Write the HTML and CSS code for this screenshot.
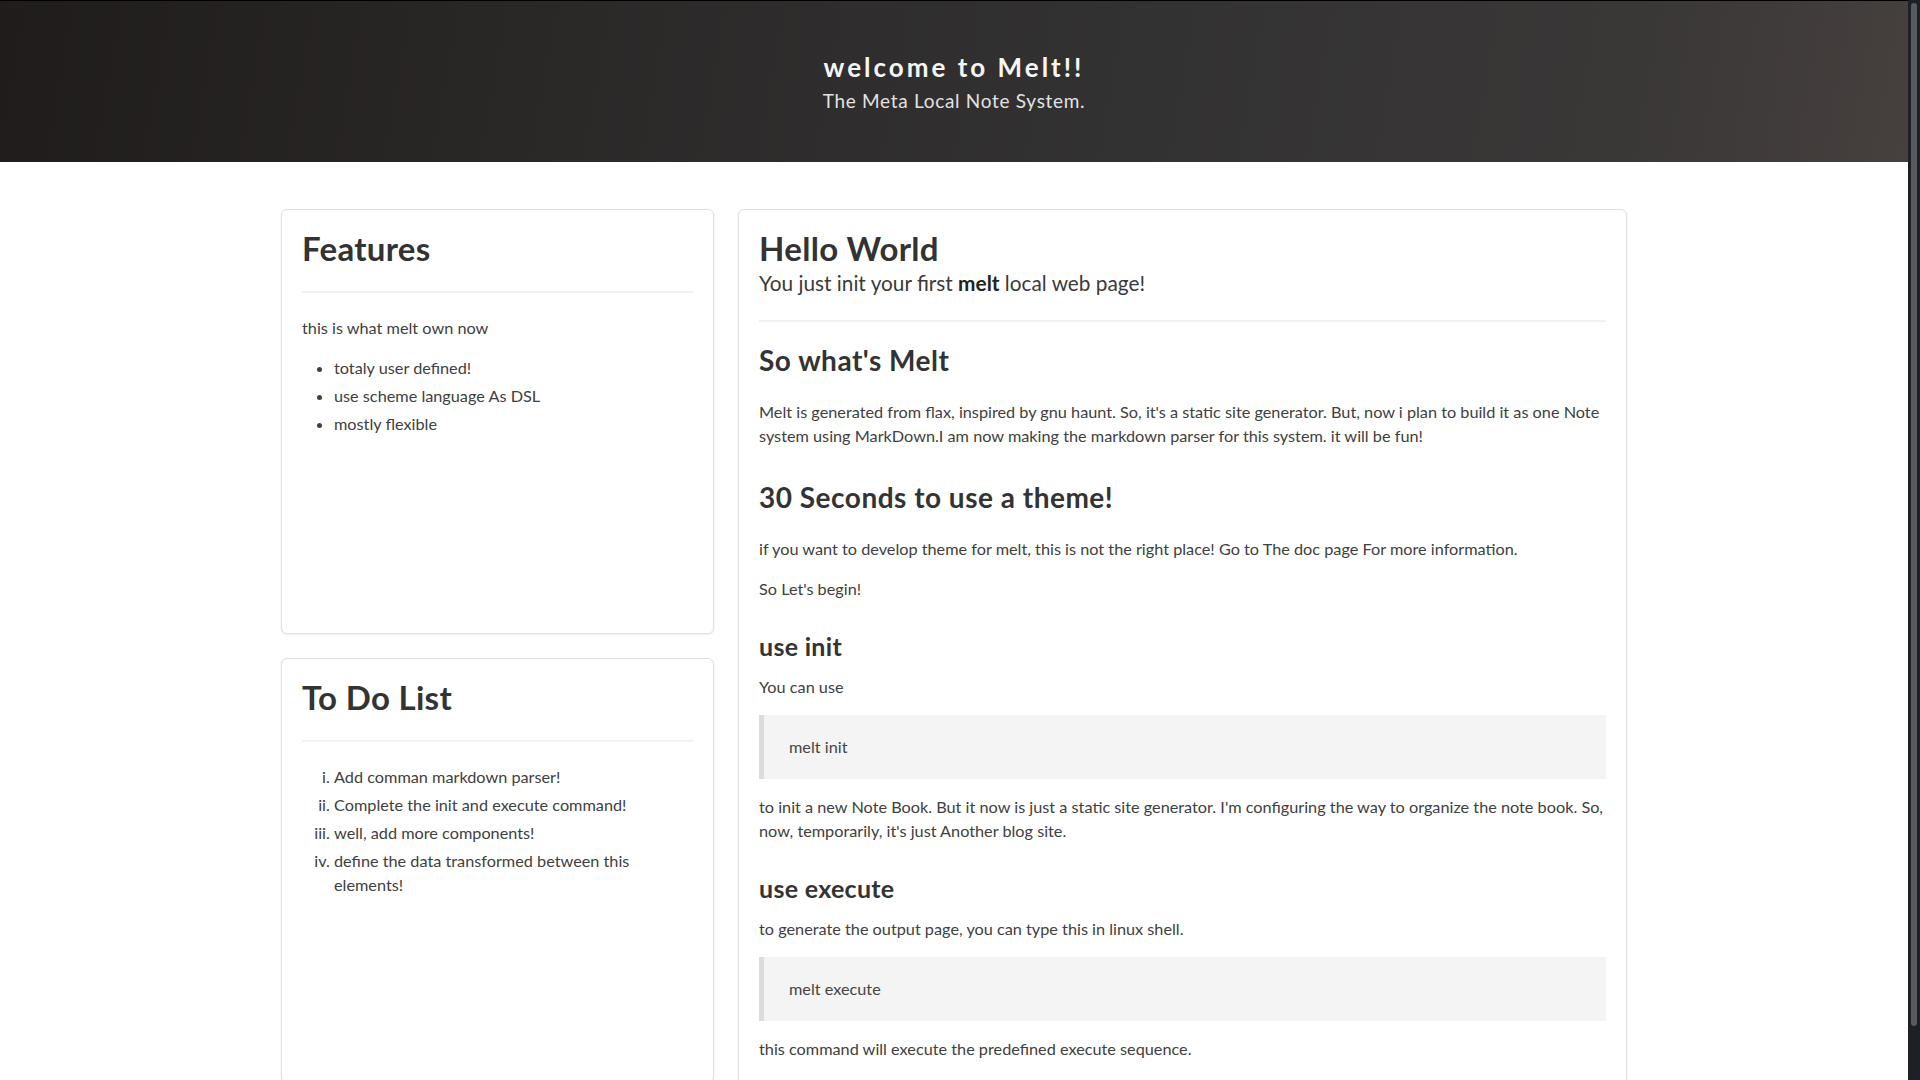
FILE: index.html
```html
<!DOCTYPE html>
<html lang="en">
<head>
<meta charset="utf-8">
<title>welcome to Melt!!</title>
<link rel="stylesheet" href="styles.css">
</head>
<body>
<header class="hero">
  <h1 class="hero-title">welcome to Melt!!</h1>
  <p class="hero-sub">The Meta Local Note System.</p>
</header>

<main class="layout">
  <aside class="side">
    <section class="card side-card">
      <h1 class="card-title">Features</h1>
      <hr class="divider">
      <p>this is what melt own now</p>
      <ul class="list">
        <li>totaly user defined!</li>
        <li>use scheme language As DSL</li>
        <li>mostly flexible</li>
      </ul>
    </section>
    <section class="card side-card">
      <h1 class="card-title">To Do List</h1>
      <hr class="divider">
      <ol class="list roman">
        <li>Add comman markdown parser!</li>
        <li>Complete the init and execute command!</li>
        <li>well, add more components!</li>
        <li>define the data transformed between this elements!</li>
      </ol>
    </section>
  </aside>

  <article class="card post">
    <h1 class="card-title">Hello World</h1>
    <p class="lead">You just init your first <strong>melt</strong> local web page!</p>
    <hr class="divider">
    <h2 class="sec">So what's Melt</h2>
    <p>Melt is generated from flax, inspired by gnu haunt. So, it's a static site generator. But, now i plan to build it as one Note system using MarkDown.I am now making the markdown parser for this system. it will be fun!</p>
    <h2 class="sec">30 Seconds to use a theme!</h2>
    <p>if you want to develop theme for melt, this is not the right place! Go to The doc page For more information.</p>
    <p>So Let's begin!</p>
    <h3 class="sub">use init</h3>
    <p>You can use</p>
    <blockquote class="code">melt init</blockquote>
    <p>to init a new Note Book. But it now is just a static site generator. I'm configuring the way to organize the note book. So, now, temporarily, it's just Another blog site.</p>
    <h3 class="sub">use execute</h3>
    <p>to generate the output page, you can type this in linux shell.</p>
    <blockquote class="code">melt execute</blockquote>
    <p>this command will execute the predefined execute sequence.</p>
  </article>
</main>

<div class="scrollbar" aria-hidden="true"><div class="scrollbar-thumb"></div></div>
</body>
</html>
```

FILE: styles.css
```css
body {
  margin: 0 12px 0 0;
  font-family: Lato, "Noto Sans", sans-serif;
  font-size: 16.25px;
  line-height: 24px;
  color: #404040;
  background: #fff;
}

/* emulated browser scrollbar on the right edge */
.scrollbar {
  position: fixed;
  top: 0;
  right: 0;
  width: 12px;
  height: 100vh;
  background: #1d2025;
}
.scrollbar-thumb {
  position: absolute;
  top: 3px;
  left: 3px;
  width: 6px;
  height: 1023px;
  border-radius: 3px;
  background: #5a5b5e;
}

.hero {
  box-sizing: border-box;
  height: 162px;
  border-top: 1px solid #000;
  padding-top: 48px;
  text-align: center;
  background: linear-gradient(100deg, #201c1c 0%, #2b2828 30%, #333232 60%, #3a3737 85%, #46403e 100%);
}
.hero-title {
  margin: 0;
  font-size: 26px;
  line-height: 36px;
  font-weight: 700;
  letter-spacing: 3px;
  color: #f6f6f6;
}
.hero-sub {
  margin: 2px 0 0;
  font-size: 19px;
  line-height: 28px;
  letter-spacing: 0.7px;
  color: #e2e2e2;
}

.layout {
  width: 1346px;
  margin: 47px auto 40px;
  display: grid;
  grid-template-columns: 433px 1fr;
  gap: 24px;
  align-items: start;
}
.side {
  display: flex;
  flex-direction: column;
  gap: 24px;
}

.card {
  background: #fff;
  border: 1px solid #e0e0e0;
  border-radius: 6px;
  box-shadow: 0 1px 2px rgba(0, 0, 0, 0.08);
  padding: 18px 20px 20px;
}
.side-card {
  box-sizing: border-box;
  min-height: 425px;
}

.card-title {
  margin: 0;
  font-size: 33px;
  line-height: 40px;
  font-weight: 700;
  letter-spacing: 0.3px;
  color: #333;
}
.lead {
  margin: 0;
  font-size: 20.8px;
  line-height: 29px;
  color: #3a3a3a;
}
.lead strong {
  font-weight: 700;
  color: #222;
}

.divider {
  border: 0;
  border-top: 2px solid #f1f1f1;
  margin: 23px 0;
}

p {
  margin: 16px 0;
}
.divider + p {
  margin-top: 0;
}

.list {
  margin: 16px 0;
  padding-left: 32px;
}
.list li {
  margin-bottom: 4px;
}
.roman {
  list-style: lower-roman;
}
.divider + .list {
  margin-top: 0;
}

.sec {
  margin: 34px 0 24px;
  font-size: 28px;
  line-height: 31px;
  font-weight: 700;
  letter-spacing: 0.5px;
  color: #333;
}
.divider + .sec {
  margin-top: 0;
}

.sub {
  margin: 32px 0 16px;
  font-size: 25px;
  line-height: 26px;
  font-weight: 700;
  letter-spacing: 0.3px;
  color: #333;
}

.code {
  margin: 16px 0;
  padding: 20px 25px;
  background: #f4f4f4;
  border-left: 5px solid #dcdcdc;
  color: #444;
}
```
